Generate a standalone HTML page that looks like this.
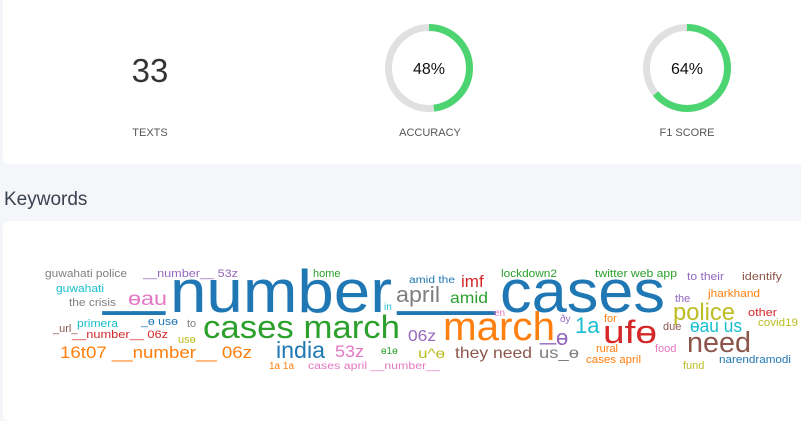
<!DOCTYPE html>
<html><head><meta charset="utf-8"><style>
html,body{margin:0;padding:0;background:#f4f6f9;width:801px;height:402px;overflow:hidden;font-family:"Liberation Sans",sans-serif}
.card{position:absolute;background:#fff;border-radius:6px}
</style></head><body>
<div class="card" style="left:3px;top:-6px;width:810px;height:170px"></div>
<div class="card" style="left:3px;top:221px;width:810px;height:200px"></div>
<svg width="801" height="402" style="position:absolute;left:0;top:0" font-family="Liberation Sans, sans-serif">
<text x="150" y="82" font-size="33" fill="#333" text-anchor="middle">33</text>
<g font-size="11" fill="#555" text-anchor="middle">
<text x="150" y="136">TEXTS</text><text x="430" y="136">ACCURACY</text><text x="687" y="136">F1 SCORE</text></g>
<circle cx="429" cy="68" r="40.5" fill="none" stroke="#e0e0e0" stroke-width="7"/>
<circle cx="429" cy="68" r="40.5" fill="none" stroke="#4cd471" stroke-width="7" stroke-dasharray="122.1 300" transform="rotate(-90 429 68)"/>
<circle cx="687" cy="68" r="40.5" fill="none" stroke="#e0e0e0" stroke-width="7"/>
<circle cx="687" cy="68" r="40.5" fill="none" stroke="#4cd471" stroke-width="7" stroke-dasharray="162.9 300" transform="rotate(-90 687 68)"/>
<text x="429" y="74" font-size="16" fill="#111" text-anchor="middle">48%</text>
<text x="687" y="74" font-size="16" fill="#111" text-anchor="middle">64%</text>
<text x="4" y="205" font-size="19" fill="#3a4250">Keywords</text>
<text font-size="60" fill="#1f77b4" lengthAdjust="spacingAndGlyphs"><tspan x="103" y="303" textLength="62" lengthAdjust="spacingAndGlyphs">__</tspan><tspan x="170" y="312" textLength="222" lengthAdjust="spacingAndGlyphs">number</tspan><tspan x="398" y="303" textLength="97" lengthAdjust="spacingAndGlyphs">__</tspan></text>
<text x="500" y="312" font-size="60" fill="#1f77b4" textLength="165" lengthAdjust="spacingAndGlyphs">cases</text>
<text x="45" y="277" font-size="11" fill="#7f7f7f" textLength="82" lengthAdjust="spacingAndGlyphs">guwahati police</text>
<text x="143" y="277" font-size="11" fill="#9467bd" textLength="95" lengthAdjust="spacingAndGlyphs">__number__ 53z</text>
<text x="56" y="292" font-size="11" fill="#17becf" textLength="48" lengthAdjust="spacingAndGlyphs">guwahati</text>
<text x="69" y="306" font-size="11" fill="#7f7f7f" textLength="47" lengthAdjust="spacingAndGlyphs">the crisis</text>
<text x="128" y="305" font-size="19" fill="#e377c2" textLength="39" lengthAdjust="spacingAndGlyphs">ɵau</text>
<text x="313" y="277" font-size="11" fill="#2ca02c">home</text>
<text x="409" y="283" font-size="10" fill="#1f77b4" textLength="46" lengthAdjust="spacingAndGlyphs">amid the</text>
<text x="461" y="287" font-size="17" fill="#d62728">imf</text>
<text x="501" y="277" font-size="11" fill="#2ca02c" textLength="56" lengthAdjust="spacingAndGlyphs">lockdown2</text>
<text x="595" y="277" font-size="11" fill="#2ca02c" textLength="82" lengthAdjust="spacingAndGlyphs">twitter web app</text>
<text x="687" y="280" font-size="11" fill="#9467bd" textLength="37" lengthAdjust="spacingAndGlyphs">to their</text>
<text x="742" y="280" font-size="11" fill="#8c564b" textLength="40" lengthAdjust="spacingAndGlyphs">identify</text>
<text x="396" y="302" font-size="22" fill="#7f7f7f" textLength="44" lengthAdjust="spacingAndGlyphs">april</text>
<text x="450" y="303" font-size="16" fill="#2ca02c" textLength="38" lengthAdjust="spacingAndGlyphs">amid</text>
<text x="384" y="310" font-size="10" fill="#17becf">in</text>
<text x="708" y="297" font-size="11" fill="#ff7f0e" textLength="52" lengthAdjust="spacingAndGlyphs">jharkhand</text>
<text x="675" y="302" font-size="11" fill="#9467bd">the</text>
<text x="673" y="320" font-size="24" fill="#bcbd22" textLength="62" lengthAdjust="spacingAndGlyphs">police</text>
<text x="748" y="316" font-size="11" fill="#d62728" textLength="29" lengthAdjust="spacingAndGlyphs">other</text>
<text x="758" y="326" font-size="11" fill="#bcbd22" textLength="40" lengthAdjust="spacingAndGlyphs">covid19</text>
<text x="77" y="327" font-size="11" fill="#17becf" textLength="41" lengthAdjust="spacingAndGlyphs">primera</text>
<text x="141" y="325" font-size="11" fill="#1f77b4" textLength="37" lengthAdjust="spacingAndGlyphs">_ɵ usɵ</text>
<text x="187" y="327" font-size="11" fill="#7f7f7f">to</text>
<text x="53" y="332" font-size="11" fill="#8c564b">_url_</text>
<text x="203" y="338" font-size="32" fill="#2ca02c" textLength="197" lengthAdjust="spacingAndGlyphs">cases march</text>
<text x="72" y="338" font-size="11" fill="#d62728" textLength="96" lengthAdjust="spacingAndGlyphs">__number__ 06z</text>
<text x="178" y="343" font-size="11" fill="#bcbd22">usɵ</text>
<text x="494" y="316" font-size="10" fill="#e377c2">en</text>
<text x="443" y="340" font-size="40" fill="#ff7f0e" textLength="112" lengthAdjust="spacingAndGlyphs">march</text>
<text x="560" y="322" font-size="10" fill="#9467bd">ðy</text>
<text x="575" y="333" font-size="22" fill="#17becf">1a</text>
<text font-size="22" fill="#9467bd"><tspan x="540" y="340" textLength="16" lengthAdjust="spacingAndGlyphs">_</tspan><tspan x="556" y="345">ɵ</tspan></text>
<text x="603" y="343" font-size="32" fill="#d62728" textLength="54" lengthAdjust="spacingAndGlyphs">ufɵ</text>
<text x="604" y="322" font-size="11" fill="#ff7f0e">for</text>
<text x="663" y="330" font-size="11" fill="#8c564b">due</text>
<text x="690" y="332" font-size="18" fill="#17becf" textLength="52" lengthAdjust="spacingAndGlyphs">ɵau us</text>
<text x="687" y="352" font-size="29" fill="#8c564b" textLength="64" lengthAdjust="spacingAndGlyphs">need</text>
<text x="408" y="341" font-size="16" fill="#9467bd" textLength="28" lengthAdjust="spacingAndGlyphs">06z</text>
<text x="60" y="358" font-size="17" fill="#ff7f0e" textLength="192" lengthAdjust="spacingAndGlyphs">16t07 __number__ 06z</text>
<text x="276" y="358" font-size="23" fill="#1f77b4" textLength="49" lengthAdjust="spacingAndGlyphs">india</text>
<text x="335" y="357" font-size="17" fill="#e377c2" textLength="29" lengthAdjust="spacingAndGlyphs">53z</text>
<text x="381" y="354" font-size="10" fill="#2ca02c">ɵ1ɵ</text>
<text x="418" y="358" font-size="14" fill="#bcbd22" textLength="27" lengthAdjust="spacingAndGlyphs">u^ɵ</text>
<text x="455" y="358" font-size="16" fill="#8c564b" textLength="77" lengthAdjust="spacingAndGlyphs">they need</text>
<text x="539" y="358" font-size="16" fill="#7f7f7f" textLength="40" lengthAdjust="spacingAndGlyphs">us_ɵ</text>
<text x="596" y="352" font-size="11" fill="#ff7f0e">rural</text>
<text x="655" y="352" font-size="11" fill="#e377c2">food</text>
<text x="586" y="363" font-size="11" fill="#ff7f0e" textLength="55" lengthAdjust="spacingAndGlyphs">cases april</text>
<text x="269" y="369" font-size="10" fill="#ff7f0e" textLength="25" lengthAdjust="spacingAndGlyphs">1a 1a</text>
<text x="308" y="369" font-size="10" fill="#e377c2" textLength="132" lengthAdjust="spacingAndGlyphs">cases april __number__</text>
<text x="683" y="369" font-size="11" fill="#bcbd22">fund</text>
<text x="719" y="363" font-size="11" fill="#1f77b4" textLength="72" lengthAdjust="spacingAndGlyphs">narendramodi</text>
</svg>
</body></html>
